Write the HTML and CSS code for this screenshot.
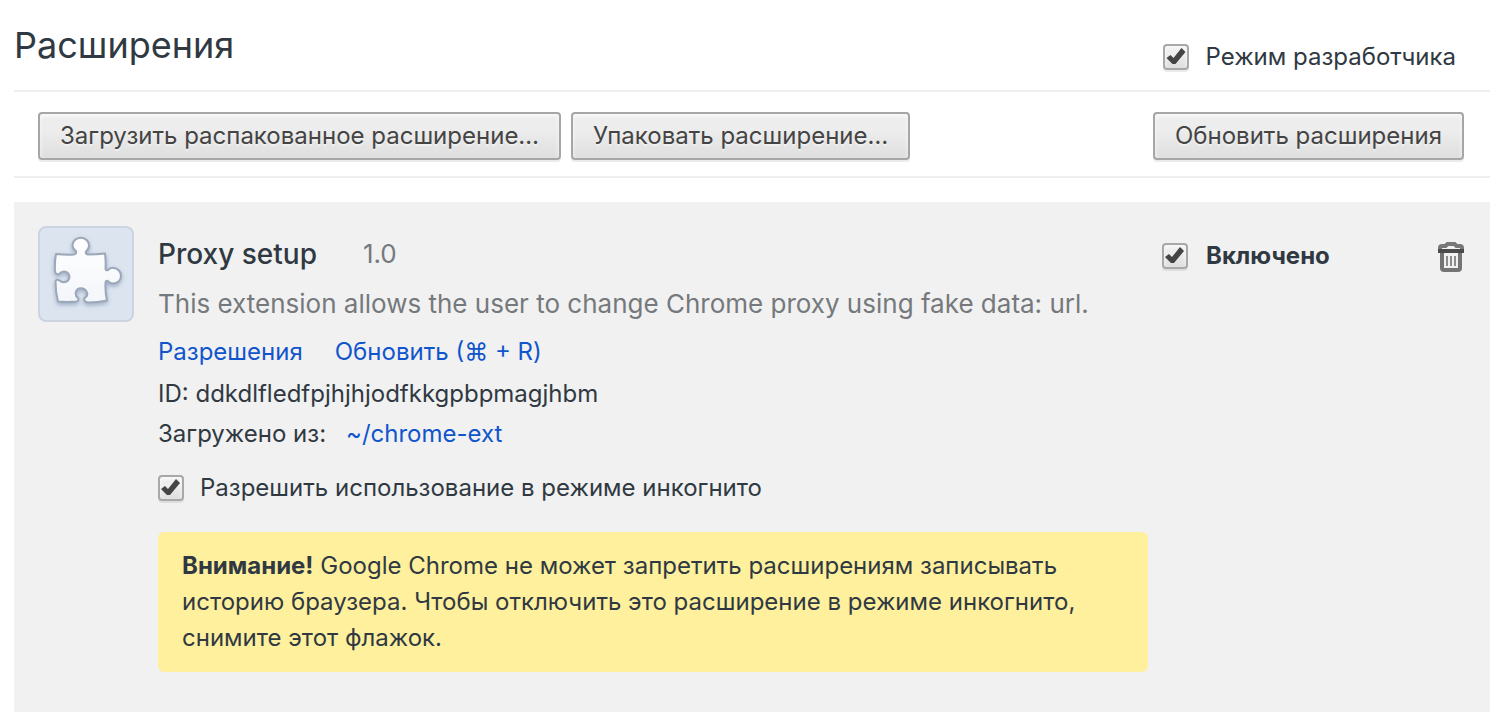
FILE: index.html
```html
<!DOCTYPE html>
<html lang="ru">
<head>
<meta charset="utf-8">
<meta name="viewport" content="width=device-width, initial-scale=1">
<title>Расширения</title>
<link rel="stylesheet" href="styles.css">
</head>
<body>
<main class="page">
  <header class="page-header">
    <h1 class="page-title">Расширения</h1>
    <label class="check dev-mode"><input class="checkbox" type="checkbox" checked><span>Режим разработчика</span></label>
  </header>

  <div class="toolbar">
    <button class="button" type="button">Загрузить распакованное расширение…</button>
    <button class="button" type="button">Упаковать расширение…</button>
    <button class="button button-end" type="button">Обновить расширения</button>
  </div>

  <article class="extension">
    <svg class="extension-icon" viewBox="0 0 96 96" aria-hidden="true">
      <defs>
        <linearGradient id="piece" x1="0" y1="0" x2="0" y2="1">
          <stop offset="0" stop-color="#ffffff"/>
          <stop offset="1" stop-color="#f3f6fa"/>
        </linearGradient>
        <filter id="shade" x="-20%" y="-20%" width="140%" height="150%">
          <feDropShadow dx="0" dy="2" stdDeviation="2" flood-color="#7388ab" flood-opacity=".6"/>
        </filter>
      </defs>
      <rect x="1" y="1" width="94" height="94" rx="7" fill="#dce4ef" stroke="#ccd4e2" stroke-width="2"/>
      <path transform="translate(-1 1)" filter="url(#shade)" fill="url(#piece)" stroke="#9ca7b8" stroke-width="2" stroke-linejoin="round" d="M19 27Q29 28 37 27.500Q40 27 39 24C36 22 35.500 20 35.500 18.500A8.200 7.700 0 0 1 52 18.500C52 21 51 23 49 24.500Q48 27 51 27.500Q60 27.500 68 26.500Q69 34 68.500 42Q69 44 71 43C73 41 75 40.500 76.500 41A7.600 7.600 0 0 1 76 56.500C74 56.500 72 55.500 71 54Q68.500 53 68.500 56Q68 65 70 73.500Q61 75.500 51 75.500Q46 74.500 47.500 71C50 69.500 51 67 49.500 64.500C47.500 60 40.500 60 39 64.500C38 67.500 39 69.500 41 71Q42.500 74 39 74.500Q30 75.500 21 74.500Q18.500 65 18.500 54.500Q19.500 51.500 22.500 53.500C25 56 29 55.500 31 53.500C34 50 32 45 27.500 44.500C25 44 23 46 22 47Q18.500 48 18 44Q17.500 35 19 27Z"/>
    </svg>

    <div class="details">
      <div class="heading">
        <h2 class="name">Proxy setup</h2>
        <span class="version">1.0</span>
      </div>
      <p class="description">This extension allows the user to change Chrome proxy using fake data: url.</p>
      <div class="links">
        <a class="link" href="#permissions">Разрешения</a>
        <a class="link" href="#reload">Обновить (⌘ + R)</a>
      </div>
      <p class="meta">ID: ddkdlfledfpjhjhjodfkkgpbpmagjhbm</p>
      <p class="meta source"><span>Загружено из:</span><a class="link" href="#path">~/chrome-ext</a></p>
      <label class="check incognito"><input class="checkbox" type="checkbox" checked><span>Разрешить использование в режиме инкогнито</span></label>
      <p class="warning"><strong>Внимание!</strong> Google Chrome не может запретить расширениям записывать историю браузера. Чтобы отключить это расширение в режиме инкогнито, снимите этот флажок.</p>
    </div>

    <div class="controls">
      <label class="check enabled"><input class="checkbox" type="checkbox" checked><span>Включено</span></label>
      <button class="trash" type="button" aria-label="Удалить">
        <svg class="trash-icon" viewBox="0 0 26 30" aria-hidden="true">
          <path d="M2 8V6Q2 4 4 4H7.500L9.500 2H16.500L18.500 4H22Q24 4 24 6V8" fill="none" stroke="#777" stroke-width="4"/>
          <path d="M0 7H26V11H0Z" fill="#4c4c4c"/>
          <path d="M4 11V26Q4 28 6 28H20Q22 28 22 26V11" fill="none" stroke="#747474" stroke-width="4"/>
          <path d="M9 14V24M13 14V24M17 14V24" stroke="#8c8c8c" stroke-width="2"/>
        </svg>
      </button>
    </div>
  </article>
</main>
</body>
</html>
```
FILE: styles.css
```css
* { box-sizing: border-box; }

body {
  margin: 0;
  background: #fff;
  color: #303942;
  font: 24px/36px Inter, "Liberation Sans", "DejaVu Sans", sans-serif;
}

.page { padding: 0 12px 12px 14px; }

.page-header {
  display: flex;
  justify-content: space-between;
  align-items: center;
  min-height: 92px;
  border-bottom: 2px solid #eee;
}

.page-title {
  margin: 0;
  font-size: 36px;
  font-weight: 400;
  line-height: 48px;
}

.check {
  display: flex;
  align-items: center;
  gap: 16px;
}

.dev-mode { padding: 24px 34px 0 0; }

.checkbox {
  appearance: none;
  flex: none;
  width: 26px;
  height: 26px;
  margin: 0;
  border: 2px solid #a8a8a8;
  border-radius: 4px;
  background: linear-gradient(#ededed 38%, #dedede);
  box-shadow: 0 2px 0 rgba(0, 0, 0, .08), inset 0 2px 4px rgba(255, 255, 255, .75);
}

.checkbox:checked::before {
  content: "";
  display: block;
  width: 22px;
  height: 22px;
  background: #444;
  clip-path: polygon(1px 12px, 5px 9px, 8px 12px, 16px 2px, 20px 6px, 10px 18px, 7px 18px);
}

.toolbar {
  display: flex;
  flex-wrap: wrap;
  gap: 10px;
  padding: 20px 26px 16px 24px;
  border-bottom: 2px solid #eee;
}

.button {
  height: 48px;
  padding: 0 20px;
  border: 2px solid #a6a6a6;
  border-radius: 4px;
  background: linear-gradient(#ededed 38%, #dedede);
  box-shadow: 0 2px 0 rgba(0, 0, 0, .08), inset 0 2px 4px rgba(255, 255, 255, .75);
  color: #444;
  font: inherit;
  text-shadow: 0 2px 0 #f0f0f0;
}

.button-end { margin-left: auto; }

.extension {
  display: flex;
  gap: 24px;
  margin-top: 24px;
  padding: 24px 26px 40px 24px;
  background: #f1f1f1;
}

.extension-icon {
  flex: none;
  width: 96px;
  height: 96px;
}

.details {
  flex: 1;
  min-width: 0;
  padding-top: 8px;
}

.heading {
  display: flex;
  align-items: center;
  gap: 46px;
  font-size: 28px;
  line-height: 40px;
}

.name {
  margin: 0;
  font-size: 28px;
  font-weight: 500;
}

.version, .description { color: #75797c; }

.version { font-size: 26px; }

.description {
  margin: 10px 0 6px;
  font-size: 26px;
  line-height: 40px;
}

.links {
  display: flex;
  gap: 32px;
  padding: 4px 0;
}

.link {
  color: #15c;
  text-decoration: none;
}

.meta {
  margin: 0;
  line-height: 40px;
}

.source {
  display: flex;
  gap: 20px;
}

.incognito { padding: 16px 0; }

.warning {
  margin: 10px 0 0;
  padding: 16px 24px;
  border-radius: 6px;
  background: #fef09d;
}

.controls {
  display: flex;
  flex: 0 0 302px;
  align-items: flex-start;
  justify-content: space-between;
  margin-left: -10px;
  padding-top: 12px;
}

.enabled {
  gap: 18px;
  font-weight: 700;
}

.trash {
  padding: 4px 0;
  border: 0;
  background: none;
}

.trash-icon {
  display: block;
  width: 26px;
  height: 30px;
}
```
